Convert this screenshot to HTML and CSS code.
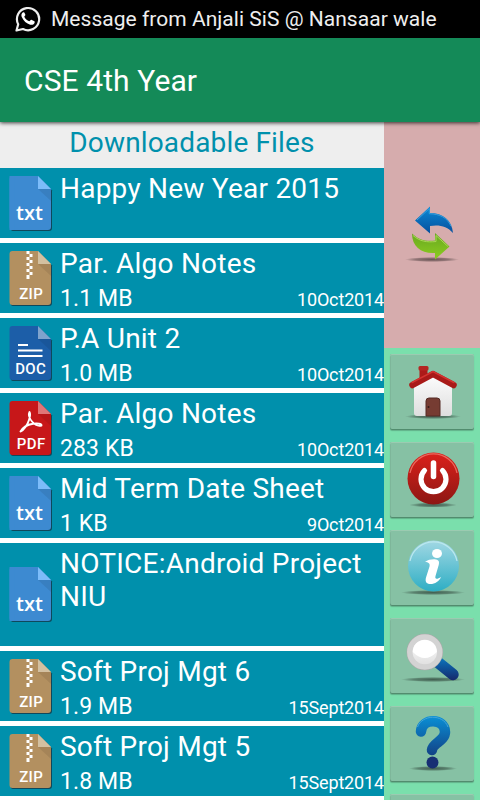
FILE: index.html
```html
<!DOCTYPE html>
<html lang="en">
<head>
    <meta charset="UTF-8">
    <meta name="viewport" content="width=device-width, initial-scale=1.0">
    <title>CSE 4th Year</title>
    <link rel="stylesheet" href="styles.css">
</head>
<body>
    <!-- shared icons -->
    <svg class="defs" width="0" height="0">
        <defs>
            <linearGradient id="blue" x1="0" y1="0" x2="0" y2="1">
                <stop offset="0" stop-color="#0a8ad6"/>
                <stop offset="1" stop-color="#064f9d"/>
            </linearGradient>
            <linearGradient id="navy" gradientUnits="userSpaceOnUse" x1="0" y1="10" x2="0" y2="62">
                <stop offset="0" stop-color="#0a90d6"/>
                <stop offset="1" stop-color="#15296c"/>
            </linearGradient>
            <linearGradient id="handle" gradientUnits="userSpaceOnUse" x1="0" y1="38" x2="0" y2="62">
                <stop offset="0" stop-color="#0a7cc4"/>
                <stop offset="1" stop-color="#15296c"/>
            </linearGradient>
            <linearGradient id="green" x1="0" y1="0" x2="0" y2="1">
                <stop offset="0" stop-color="#68a820"/>
                <stop offset="1" stop-color="#8ccc20"/>
            </linearGradient>
            <linearGradient id="red" x1="0" y1="0" x2="0" y2="1">
                <stop offset="0" stop-color="#dc211b"/>
                <stop offset="1" stop-color="#8c1713"/>
            </linearGradient>
            <linearGradient id="aqua" x1="0" y1="0" x2="0" y2="1">
                <stop offset="0" stop-color="#a2d8e4"/>
                <stop offset="1" stop-color="#2eaec4"/>
            </linearGradient>
            <linearGradient id="wall" x1="0" y1="0" x2="0" y2="1">
                <stop offset="0" stop-color="#ffffff"/>
                <stop offset="1" stop-color="#dedede"/>
            </linearGradient>
            <radialGradient id="shade">
                <stop offset="0" stop-color="#000" stop-opacity=".5"/>
                <stop offset=".6" stop-color="#000" stop-opacity=".33"/>
                <stop offset="1" stop-color="#000" stop-opacity="0"/>
            </radialGradient>
            <symbol id="page" viewBox="0 0 44 57">
                <path d="M3 2.500h27l13 13V53a3 3 0 0 1-3 3H4a3 3 0 0 1-2-1z" fill="#123c4c" opacity=".85"/>
                <path d="M3.500 1H29L42 14V52a3 3 0 0 1-3 3H3.500a3 3 0 0 1-3-3V4a3 3 0 0 1 3-3z" fill="currentColor"/>
                <path d="M29 14h13v12z" fill="#000" opacity=".08"/>
            </symbol>
            <symbol id="txt" viewBox="0 0 44 57">
                <use href="#page"/>
                <path d="M.5 1h5v54h-5z" fill="currentColor"/>
                <path d="M29 1v13h13z" fill="#7cbcfa"/>
                <text x="20.500" y="45" class="label label-txt">txt</text>
            </symbol>
            <symbol id="zip" viewBox="0 0 44 57">
                <use href="#page"/>
                <path d="M29 1v13h13z" fill="#d3c0a0"/>
                <path d="M17.500 1h3v3h-3zM20.500 4h3v3h-3zM17.500 7h3v3h-3zM20.500 10h3v3h-3zM17.500 13h3v3h-3zM20.500 16h3v3h-3zM17.500 19h3v3h-3zM20.500 22h3v3h-3zM17.500 25h3v4h-3z" fill="#fff"/>
                <text x="22" y="49" class="label" textLength="23.500">ZIP</text>
            </symbol>
            <symbol id="doc" viewBox="0 0 44 57">
                <use href="#page"/>
                <path d="M29 1v13h13z" fill="#7ea3cd"/>
                <path d="M9 20h10M9 25.500h24.500M9 31h24.500" stroke="#fff" stroke-width="2"/>
                <text x="21.500" y="49" class="label" textLength="30.500">DOC</text>
            </symbol>
            <symbol id="pdf" viewBox="0 0 44 57">
                <use href="#page"/>
                <path d="M29 1v13h13z" fill="#e07577"/>
                <path d="M20.500 12C19 15 20.500 18.500 23 21.500C25.500 24.500 29 26.500 32.500 25.500C33 23.500 28 23 24 23.700C18.500 24.600 14 27 11.500 31.500C15 30.500 18.500 24.500 20 20C21 17 21.500 13.500 20.500 12z" fill="none" stroke="#fff" stroke-width="1.900" stroke-linejoin="round"/>
                <text x="22" y="49" class="label" textLength="28.500">PDF</text>
            </symbol>
        </defs>
    </svg>

    <div class="status">
        <svg width="26" height="26" viewBox="0 0 26 26">
            <path d="M1.500 24.500l1.700-6.300A11.100 11.100 0 1 1 8 23z" fill="none" stroke="#eee" stroke-width="2.200" stroke-linejoin="round"/>
            <path d="M9.300 6.500c-.6-.5-1.600-.3-2.100.4-1 1.200-1 2.900-.3 4.300 1.700 3.600 4.500 6.400 8.300 7.500 1.700.5 3.700-.2 4.300-1.800.2-.6.300-1.300-.1-1.600l-3-1.500c-.8-.3-1.400 1.500-2.200 1.500-2-.6-4.100-2.600-4.900-4.500 0-.6 1.300-1.200 1.100-2z" fill="#fff"/>
        </svg>
        <span>Message from Anjali SiS @ Nansaar wale</span>
    </div>
    <header class="header">
        <h1>CSE 4th Year</h1>
    </header>

    <div class="main">
        <div class="files">
            <h2>Downloadable Files</h2>
            <div class="file">
                <svg class="icon blue"><use href="#txt"/></svg>
                <div class="info">
                    <div class="name">Happy New Year 2015</div>
                </div>
            </div>
            <div class="file">
                <svg class="icon tan"><use href="#zip"/></svg>
                <div class="info">
                    <div class="name">Par. Algo Notes</div>
                    <div class="meta"><span class="size">1.1 MB</span><span class="date">10Oct2014</span></div>
                </div>
            </div>
            <div class="file">
                <svg class="icon navy"><use href="#doc"/></svg>
                <div class="info">
                    <div class="name">P.A Unit 2</div>
                    <div class="meta"><span class="size">1.0 MB</span><span class="date">10Oct2014</span></div>
                </div>
            </div>
            <div class="file">
                <svg class="icon red"><use href="#pdf"/></svg>
                <div class="info">
                    <div class="name">Par. Algo Notes</div>
                    <div class="meta"><span class="size">283 KB</span><span class="date">10Oct2014</span></div>
                </div>
            </div>
            <div class="file">
                <svg class="icon blue"><use href="#txt"/></svg>
                <div class="info">
                    <div class="name">Mid Term Date Sheet</div>
                    <div class="meta"><span class="size">1 KB</span><span class="date">9Oct2014</span></div>
                </div>
            </div>
            <div class="file tall">
                <svg class="icon blue"><use href="#txt"/></svg>
                <div class="info">
                    <div class="name">NOTICE:Android Project NIU</div>
                </div>
            </div>
            <div class="file">
                <svg class="icon tan"><use href="#zip"/></svg>
                <div class="info">
                    <div class="name">Soft Proj Mgt 6</div>
                    <div class="meta"><span class="size">1.9 MB</span><span class="date">15Sept2014</span></div>
                </div>
            </div>
            <div class="file">
                <svg class="icon tan"><use href="#zip"/></svg>
                <div class="info">
                    <div class="name">Soft Proj Mgt 5</div>
                    <div class="meta"><span class="size">1.8 MB</span><span class="date">15Sept2014</span></div>
                </div>
            </div>
        </div>

        <div class="side">
            <div class="refresh">
                <svg width="60" height="60" viewBox="0 0 60 60">
                    <ellipse cx="30" cy="56.500" rx="27" ry="2.500" fill="url(#shade)"/>
                    <path d="M13 17.500L28 3.500v6.500C41 10 50 17 51 30C45 23 37 21.500 28 23v7.500z" fill="url(#blue)"/>
                    <path d="M15 17L27.300 5.500v5.200C38 11 45 14.500 49 23" fill="none" stroke="#3a9edb" stroke-width="1"/>
                    <path d="M10 30.500C17 37 24 38.500 33 37.500V30L47.500 43.500L33 56.500V50C20 51 10 44 10 30.500z" fill="url(#green)"/>
                    <path d="M11 32.500C18 38.500 25 39.500 34 38.500V32.500L46 43.500" fill="none" stroke="#a9d657" stroke-width="1"/>
                </svg>
            </div>
            <div class="buttons">
                <button class="btn">
                    <svg width="84" height="76" viewBox="0 0 84 76">
                        <ellipse cx="43" cy="62.500" rx="28" ry="2.500" fill="url(#shade)"/>
                        <path d="M29.500 14h8v14h-8z" fill="#ac1b19"/>
                        <rect x="28.500" y="12" width="10" height="4.500" rx="1.500" fill="#b52623"/>
                        <path d="M24 30L43 18L62 30V59a3 3 0 0 1-3 3H27a3 3 0 0 1-3-3z" fill="url(#wall)"/>
                        <path d="M36 62V47a3 3 0 0 1 3-3h8a3 3 0 0 1 3 3v15z" fill="#763c32" stroke="#552b25"/>
                        <circle cx="38.500" cy="53" r="1" fill="#351d19"/>
                        <path d="M22.500 31L43 20L63.500 31" fill="none" stroke="#a91a18" stroke-width="6.500" stroke-linecap="round" stroke-linejoin="round"/>
                        <path d="M22 28.500L43 17.500L64 28.500" fill="none" stroke="#d43430" stroke-width="1.500" stroke-linecap="round"/>
                    </svg>
                </button>
                <button class="btn">
                    <svg width="84" height="76" viewBox="0 0 84 76">
                        <ellipse cx="43" cy="63" rx="24" ry="2.500" fill="url(#shade)"/>
                        <circle cx="43.500" cy="36.500" r="26" fill="url(#red)"/>
                        <path d="M20 31a24 24 0 0 1 47 0" fill="none" stroke="#ea6b5f" stroke-width="1.200"/>
                        <path d="M34.500 28.500A12.500 12.500 0 1 0 52.500 28.500" fill="none" stroke="#fff" stroke-width="5.200" stroke-linecap="round"/>
                        <path d="M43.500 21v13.500" stroke="#fff" stroke-width="5.500" stroke-linecap="round"/>
                    </svg>
                </button>
                <button class="btn">
                    <svg width="84" height="76" viewBox="0 0 84 76">
                        <ellipse cx="43" cy="62.500" rx="32" ry="2.500" fill="url(#shade)"/>
                        <circle cx="43.500" cy="36" r="25.500" fill="url(#aqua)"/>
                        <path d="M20 31a24 24 0 0 1 47 0" fill="none" stroke="#bce8ee" stroke-width="1.200"/>
                        <ellipse cx="47" cy="23.500" rx="5" ry="4.500" fill="#fff"/>
                        <path d="M35 32C38 29.500 43 29 46 29.500C49 30 49.500 32 48.700 35L45.500 46C44.700 49 46.500 50 51 47C49.500 51.500 44 54.500 39.500 54C36 53.500 35 51 36 47.500L39.500 36.500C40.300 33.500 38.500 32 35 32z" fill="#fff"/>
                    </svg>
                </button>
                <button class="btn">
                    <svg width="84" height="76" viewBox="0 0 84 76">
                        <ellipse cx="43" cy="61.500" rx="32" ry="2.500" fill="url(#shade)"/>
                        <path d="M47.500 44L63 56.500" stroke="url(#handle)" stroke-width="11.500" stroke-linecap="round"/>
                        <circle cx="34.800" cy="34" r="15" fill="#fafafa" stroke="#aaa" stroke-width="6.500"/>
                        <circle cx="34.800" cy="34" r="15" fill="url(#wall)" stroke="#d3d3d3" stroke-width="5.500"/>
                        <path d="M22.800 34a12 12 0 0 1 24 0q-12 12-24 0" fill="#fff"/>
                    </svg>
                </button>
                <button class="btn">
                    <svg width="84" height="76" viewBox="0 0 84 76">
                        <ellipse cx="43" cy="62.500" rx="24" ry="2.500" fill="url(#shade)"/>
                        <path d="M31 25.500C32 11.500 55 12 55 26C55 35 42.500 37 42 44" fill="none" stroke="url(#navy)" stroke-width="10.500" stroke-linecap="round"/>
                        <path d="M27.500 21C32 8.500 53 7.500 58 21" fill="none" stroke="#43a5d8" stroke-width="1"/>
                        <circle cx="42.500" cy="56.500" r="6" fill="#172f73"/>
                    </svg>
                </button>
                <button class="btn"></button>
            </div>
        </div>
    </div>
</body>
</html>
```
FILE: styles.css
```css
body {
    font-family: Roboto, sans-serif;
    margin: 0;
    height: 800px;
    overflow: hidden;
    display: flex;
    flex-direction: column;
    background: #fff;
    color: white;
}

h1, h2 {
    margin: 0;
    font-weight: 400;
}

.defs {
    position: absolute;
}

.status {
    height: 38px;
    flex: none;
    display: flex;
    align-items: center;
    gap: 10px;
    padding-left: 15px;
    background: #000;
    color: #eee;
    font-size: 21px;
    letter-spacing: 0.03px;
    white-space: nowrap;
}

.header {
    height: 84px;
    flex: none;
    display: flex;
    align-items: center;
    padding-left: 24px;
    background: #148a58;
    box-shadow: 0 1px 4px rgba(0, 0, 0, 0.75);
    z-index: 1;
}

.header h1 {
    font-size: 30px;
    letter-spacing: 0.1px;
}

.main {
    flex: 1;
    min-height: 0;
    display: flex;
    overflow: hidden;
}

.files {
    width: 384px;
    display: flex;
    flex-direction: column;
    gap: 5px;
}

.files h2 {
    height: 46px;
    margin-bottom: -5px;
    background: #eee;
    color: #0090ac;
    font-size: 28px;
    line-height: 41px;
    letter-spacing: 0.15px;
    text-align: center;
}

.file {
    height: 70px;
    flex: none;
    display: flex;
    align-items: center;
    background: #0090ac;
}

.file.tall {
    height: 103px;
}

.icon {
    width: 44px;
    height: 57px;
    margin-left: 9px;
    flex: none;
}

.icon.blue { color: #3d8ad1; }
.icon.tan { color: #b39060; }
.icon.navy { color: #1c5ea8; }
.icon.red { color: #c71719; }

.label {
    font-size: 15px;
    font-weight: 500;
    text-anchor: middle;
    fill: #fff;
}

.label-txt {
    font-family: "Open Sans", sans-serif;
    font-size: 20px;
    font-weight: 600;
}

.info {
    flex: 1;
    align-self: stretch;
    padding: 4px 0 0 7px;
}

.name {
    font-size: 28px;
    line-height: 33px;
    letter-spacing: 0.23px;
}

.meta {
    display: flex;
    justify-content: space-between;
    align-items: baseline;
    padding-top: 2px;
    line-height: 33px;
}

.size {
    font-size: 23px;
    letter-spacing: 0.1px;
}

.date {
    font-size: 18px;
    letter-spacing: -0.15px;
}

.side {
    width: 96px;
    display: flex;
    flex-direction: column;
}

.refresh {
    height: 226px;
    flex: none;
    display: flex;
    align-items: center;
    justify-content: center;
    box-sizing: border-box;
    padding-bottom: 4px;
    background: #d6acad;
}

.buttons {
    flex: 1;
    min-height: 0;
    display: flex;
    flex-direction: column;
    gap: 12px;
    padding: 6px;
    overflow: hidden;
    background: #7adfac;
}

.btn {
    width: 84px;
    height: 76px;
    flex: none;
    padding: 0;
    border: none;
    border-radius: 2px;
    background: #86c1a4;
    box-shadow: inset 0 1px #9bcbb1, inset 0 -1px #528c6e, inset 1px 0 #7eb69a, 0 1px 1px rgba(0, 0, 0, 0.2);
}

.btn svg {
    display: block;
}
```
